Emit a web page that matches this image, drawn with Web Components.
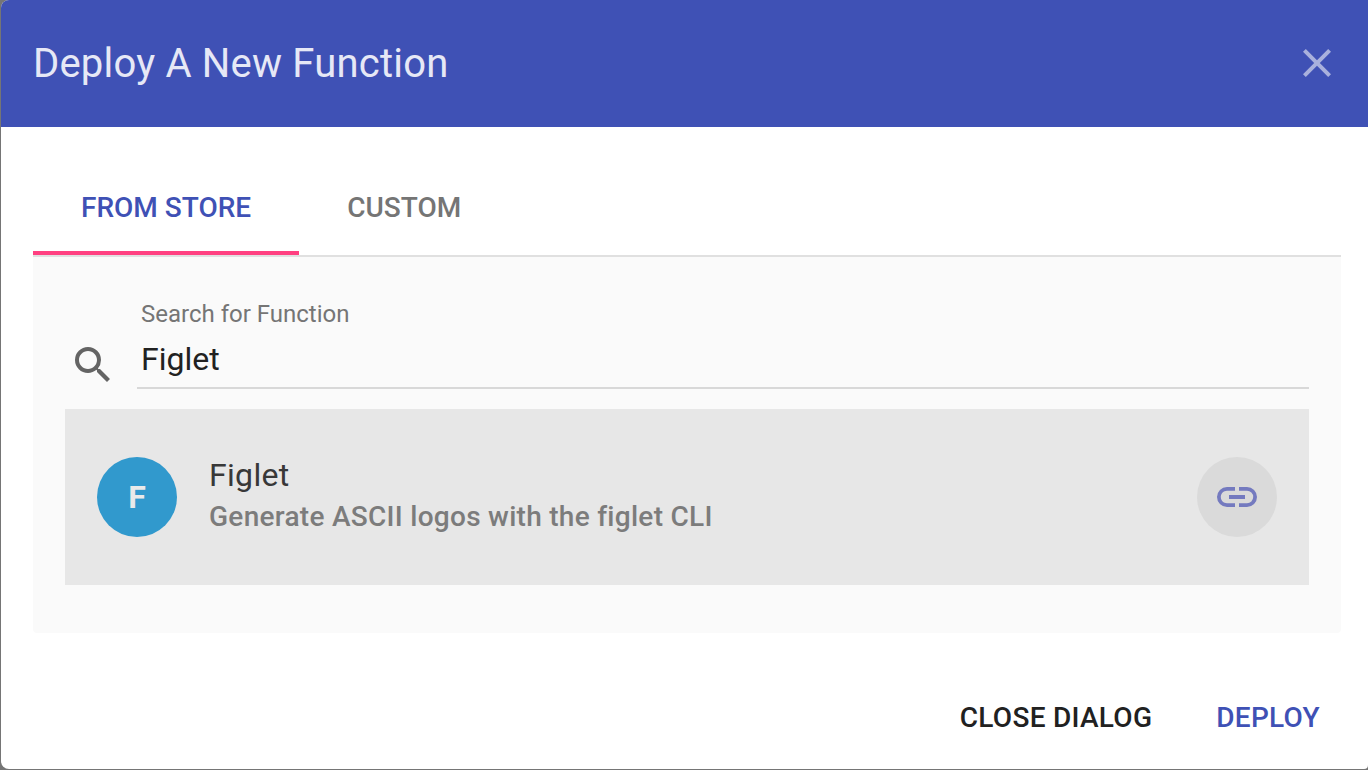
<!DOCTYPE html>
<html lang="en">
<head>
<meta charset="utf-8">
<title>Deploy A New Function</title>
<style>
html{height:100%}
body{margin:0;min-height:100%;display:flex;flex-direction:column;background:#757575;font-family:Roboto,"Liberation Sans",sans-serif;color:#212121}
</style>
</head>
<body>
<deploy-dialog>
  <span slot="title">Deploy A New Function</span>
  <tab-bar></tab-bar>
  <store-panel>
    <search-field label="Search for Function" value="Figlet"></search-field>
    <function-item initial="F">
      <span slot="name">Figlet</span>
      <span slot="description">Generate ASCII logos with the figlet CLI</span>
    </function-item>
  </store-panel>
  <flat-button slot="actions">CLOSE DIALOG</flat-button>
  <flat-button slot="actions" class="primary">DEPLOY</flat-button>
</deploy-dialog>
<script>
const define = (name, html, setup) => {
  const template = document.createElement('template');
  template.innerHTML = html;
  customElements.define(name, class extends HTMLElement {
    constructor() {
      super();
      this.attachShadow({mode: 'open'}).append(template.content.cloneNode(true));
    }
    connectedCallback() { if (setup) setup(this, this.shadowRoot); }
  });
};
const base = `*{box-sizing:border-box}button{font:inherit;color:inherit;background:none;border:0;margin:0;padding:0;cursor:pointer}svg{display:block}`;

define('flat-button', `<style>${base}
:host{display:block;color:#212121}
:host(.primary){color:#3f51b5}
button{display:block;height:72px;padding:0 16px;font-size:28px;font-weight:500;line-height:72px;letter-spacing:.01em;white-space:nowrap}
</style><button type="button"><slot></slot></button>`);

define('tab-bar', `<style>${base}
:host{display:flex;border-bottom:2px solid #e0e0e0}
button{height:96px;padding:6px 48px 0;border-bottom:4px solid transparent;font-size:28px;font-weight:500;line-height:86px;color:#757575}
button[aria-selected=true]{color:#3f51b5;border-color:#ff4081}
</style><button type="button" role="tab" aria-selected="true">FROM STORE</button><button type="button" role="tab" aria-selected="false">CUSTOM</button>`,
host => host.setAttribute('role', 'tablist'));

define('store-panel', `<style>${base}
:host{display:flex;flex-direction:column;gap:20px;background:#fafafa;border-radius:0 0 4px 4px;padding:40px 32px 48px}
</style><slot></slot>`);

define('search-field', `<style>${base}
:host{display:flex;align-items:flex-end;gap:20px;padding-left:4px}
svg{flex:none}
div{flex:1;min-width:0;display:flex;flex-direction:column;border-bottom:2px solid #d8d8d8}
label{padding:0 4px;font-size:24px;line-height:34px;color:#757575}
input{width:100%;height:56px;padding:0 4px;border:0;outline:0;background:none;font:32px/56px Roboto,"Liberation Sans",sans-serif;color:#212121}
</style>
<svg width="48" height="48" viewBox="0 0 24 24" fill="#646464" aria-hidden="true"><path d="M15.5 14h-.79l-.28-.27A6.47 6.47 0 0 0 16 9.5 6.5 6.5 0 1 0 9.5 16c1.61 0 3.09-.59 4.23-1.57l.27.28v.79l5 4.99L20.49 19l-4.99-5zm-6 0C7.01 14 5 11.99 5 9.5S7.01 5 9.5 5 14 7.01 14 9.5 11.99 14 9.5 14z"/></svg>
<div><label for="q"></label><input id="q" type="text" autocomplete="off" spellcheck="false"></div>`,
(host, root) => {
  root.querySelector('label').textContent = host.getAttribute('label');
  root.querySelector('input').value = host.getAttribute('value');
});

define('function-item', `<style>${base}
:host{display:flex;align-items:center;gap:32px;min-height:176px;padding:0 32px;background:#e7e7e7}
.avatar{flex:none;width:80px;height:80px;border-radius:50%;background:#3199cd;color:#e9eaea;text-align:center;font-size:32px;font-weight:700;line-height:80px}
.text{flex:1;min-width:0;padding-bottom:4px}
h3,p{margin:0}
h3{font-size:32px;font-weight:400;line-height:44px;letter-spacing:.01em;color:#383838}
p{font-size:28px;font-weight:500;line-height:40px;letter-spacing:.01em;color:#7c7c7c}
button{flex:none;width:80px;height:80px;border-radius:50%;display:grid;place-items:center;background:#dadada}
</style>
<div class="avatar"></div>
<div class="text"><h3><slot name="name"></slot></h3><p><slot name="description"></slot></p></div>
<button type="button" aria-label="Open project link"><svg width="48" height="48" viewBox="0 0 24 24" fill="#747abf"><path d="M3.9 12c0-1.71 1.39-3.1 3.1-3.1h4V7H7a5 5 0 0 0 0 10h4v-1.9H7c-1.71 0-3.1-1.39-3.1-3.1zM8 13h8v-2H8v2zm9-6h-4v1.9h4a3.1 3.1 0 0 1 0 6.2h-4V17h4a5 5 0 0 0 0-10z"/></svg></button>`,
(host, root) => { root.querySelector('.avatar').textContent = host.getAttribute('initial'); });

define('deploy-dialog', `<style>${base}
:host{flex:1;display:flex;flex-direction:column;margin:0 0 1px 1px;background:#fff;border-radius:8px 0 4px 8px;overflow:hidden}
header{display:flex;align-items:flex-start;justify-content:space-between;padding:39px 27px 38px 32px;background:#3f51b5}
h2{margin:0;font-size:40px;font-weight:400;line-height:50px;letter-spacing:.005em;color:#e6e8f6}
header button{width:48px;height:48px}
main{padding:32px 27px 0 32px}
footer{display:flex;justify-content:flex-end;gap:32px;margin-top:auto;padding:0 32px 15px}
</style>
<header><h2><slot name="title"></slot></h2><button type="button" aria-label="Close dialog"><svg width="48" height="48" viewBox="0 0 24 24" fill="#a9b1dd"><path d="M19 6.41L17.59 5 12 10.59 6.41 5 5 6.41 10.59 12 5 17.59 6.41 19 12 13.41 17.59 19 19 17.59 13.41 12z"/></svg></button></header>
<main><slot></slot></main>
<footer><slot name="actions"></slot></footer>`,
host => { host.setAttribute('role', 'dialog'); host.setAttribute('aria-label', 'Deploy A New Function'); });
</script>
</body>
</html>
